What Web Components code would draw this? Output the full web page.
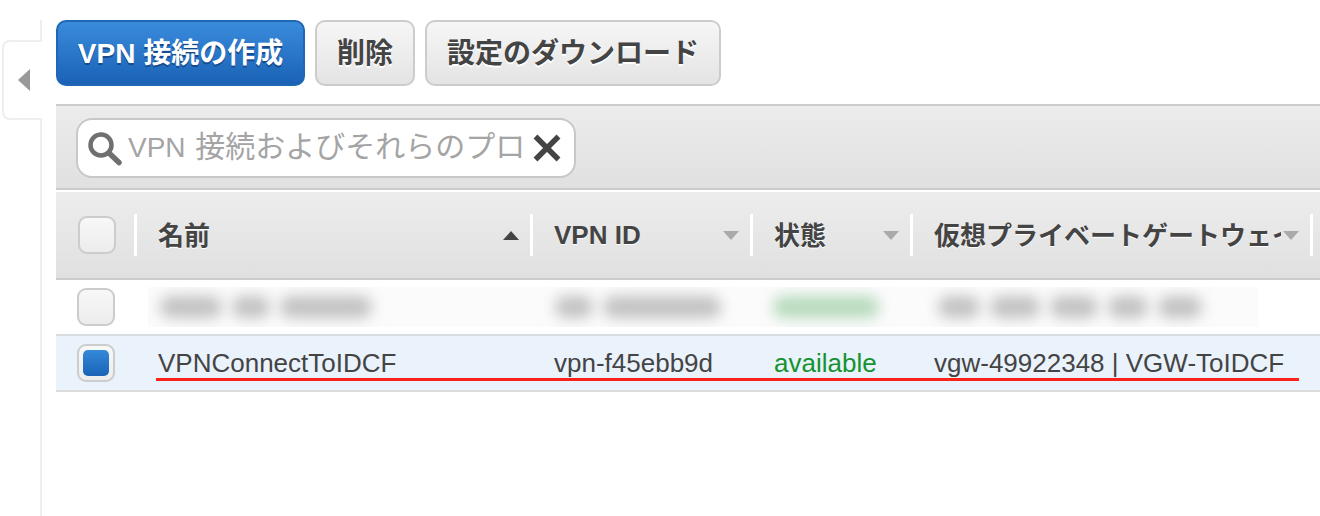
<!DOCTYPE html>
<html lang="ja">
<head>
<meta charset="utf-8">
<title>VPN 接続</title>
<style>
  html, body { margin: 0; height: 100%; background: #fff; overflow: hidden; }
  body {
    display: flex;
    font-family: "Liberation Sans", "Noto Sans CJK JP", sans-serif;
    color: #444;
  }
</style>
</head>
<body>
  <side-toggle></side-toggle>
  <vpn-page>
    <aws-button slot="actions" primary style="width:249px">VPN 接続の作成</aws-button>
    <aws-button slot="actions" style="width:100px">削除</aws-button>
    <aws-button slot="actions" style="width:296px">設定のダウンロード</aws-button>
    <search-bar slot="filter">VPN <span style="font-size:30px;margin-left:2px">接続およびそれらのプロ</span></search-bar>
    <vpn-table slot="table"></vpn-table>
  </vpn-page>

<script>
// Shared column tracks for header and rows
const COLUMNS = 'grid-template-columns: 81px 396px 220px 160px 400px 1fr;';

// Left rail with the collapse handle
class SideToggle extends HTMLElement {
  constructor() {
    super();
    this.attachShadow({ mode: 'open' }).innerHTML = `
      <style>
        :host {
          display: block;
          box-sizing: border-box;
          width: 42px;
          flex-shrink: 0;
          margin-top: 20px;
          padding: 20px 0 0 2px;
          border-right: 2px solid #eee;
        }
        .handle {
          box-sizing: border-box;
          width: 40px;
          height: 80px;
          display: flex;
          align-items: center;
          padding-left: 14px;
          background: #fff;
          border: 2px solid #eee;
          border-right: 0;
          border-radius: 8px 0 0 8px;
        }
        svg { display: block; }
      </style>
      <div class="handle">
        <svg width="12" height="22" viewBox="0 0 12 22"><path d="M12 0V22L0 11Z" fill="#999"/></svg>
      </div>`;
  }
}

// Page column: action buttons, filter bar, table
class VpnPage extends HTMLElement {
  constructor() {
    super();
    this.attachShadow({ mode: 'open' }).innerHTML = `
      <style>
        :host {
          display: block;
          flex: 1;
          min-width: 0;
          margin-left: 14px;
          padding-top: 20px;
        }
        .actions { display: flex; gap: 10px; height: 66px; margin-bottom: 18px; }
      </style>
      <div class="actions"><slot name="actions"></slot></div>
      <slot name="filter"></slot>
      <slot name="table"></slot>`;
  }
}

class AwsButton extends HTMLElement {
  constructor() {
    super();
    this.attachShadow({ mode: 'open' }).innerHTML = `
      <style>
        :host {
          display: flex;
          align-items: center;
          justify-content: center;
          box-sizing: border-box;
          height: 66px;
          padding-bottom: 4px;
          border: 2px solid #ccc;
          border-radius: 10px;
          background: linear-gradient(#f6f6f6, #e4e4e4);
          color: #444;
          font-size: 28px;
          font-weight: bold;
          text-shadow: 0 2px 0 #fff;
          white-space: nowrap;
        }
        :host([primary]) {
          border-color: #1f66b4;
          background: linear-gradient(#3a8bdc, #1a62b6);
          color: #fff;
          text-shadow: 0 2px 0 #154a8c;
        }
      </style>
      <slot></slot>`;
  }
}

class SearchBar extends HTMLElement {
  constructor() {
    super();
    this.attachShadow({ mode: 'open' }).innerHTML = `
      <style>
        :host {
          display: block;
          box-sizing: border-box;
          height: 86px;
          padding: 12px 20px 0;
          border-top: 2px solid #ccc;
          border-bottom: 2px solid #ccc;
          background: linear-gradient(#ececec, #e0e0e0);
        }
        .box {
          box-sizing: border-box;
          width: 500px;
          height: 60px;
          display: flex;
          align-items: center;
          padding-left: 9px;
          background: #fff;
          border: 2px solid #c8c8c8;
          border-radius: 16px;
        }
        .text {
          margin-left: 6px;
          padding-bottom: 8px;
          width: 399px;
          overflow: hidden;
          white-space: nowrap;
          color: #a4a4a4;
          font-size: 28px;
        }
        svg { display: block; flex-shrink: 0; }
        .clear { margin-left: 6px; }
      </style>
      <div class="box">
        <svg width="35" height="35" viewBox="0 0 35 35" fill="none">
          <circle cx="14" cy="14" r="10.5" stroke="#707070" stroke-width="4.5"/>
          <path d="M22 22L32 31.5" stroke="#707070" stroke-width="5.5" stroke-linecap="round"/>
        </svg>
        <span class="text"><slot></slot></span>
        <svg class="clear" width="28" height="28" viewBox="0 0 28 28">
          <path d="M2.5 2.5L25.5 25.5M25.5 2.5L2.5 25.5" stroke="#444" stroke-width="5.5"/>
        </svg>
      </div>`;
  }
}

class CheckBox extends HTMLElement {
  constructor() {
    super();
    this.attachShadow({ mode: 'open' }).innerHTML = `
      <style>
        :host {
          display: flex;
          align-items: center;
          justify-content: center;
          box-sizing: border-box;
          width: 38px;
          height: 38px;
          border: 2px solid #ccc;
          border-radius: 9px;
          background: linear-gradient(#f8f8f8, #ececec);
        }
        .mark {
          display: none;
          width: 26px;
          height: 26px;
          border-radius: 5px;
          background: linear-gradient(#348ad9, #1a62b6);
        }
        :host([checked]) .mark { display: block; }
      </style>
      <div class="mark"></div>`;
  }
}

class HeaderCell extends HTMLElement {
  constructor() {
    super();
    this.attachShadow({ mode: 'open' }).innerHTML = `
      <style>
        :host {
          display: flex;
          align-items: center;
          box-sizing: border-box;
          height: 42px;
          padding: 0 11px 0 21px;
          border-right: 3px solid;
          border-image: linear-gradient(90deg, #ccc 50%, #fff 50%) 1;
          font-size: 26px;
          font-weight: bold;
          white-space: nowrap;
          text-shadow: 0 1px 0 #fff;
        }
        .label { flex: 1; min-width: 0; overflow: hidden; }
        :host([ja]) .label { padding-bottom: 4px; }
        .arrow { width: 0; height: 0; flex-shrink: 0; margin-left: 2px;
          border: 8px solid transparent; border-bottom-width: 0; border-top: 9px solid #aaa; }
        :host([sorted]) .arrow { border-top-width: 0; border-bottom: 9px solid #444; }
      </style>
      <span class="label"><slot></slot></span>
      <span class="arrow"></span>`;
  }
}

// Redacted cell: soft blobs where the source image was blurred out
class BlurText extends HTMLElement {
  constructor() {
    super();
    this.attachShadow({ mode: 'open' }).innerHTML = `
      <style>
        :host {
          display: flex;
          align-items: center;
          gap: 10px;
          height: 40px;
        }
        i {
          display: block;
          height: 22px;
          border-radius: 11px;
          background: var(--blob, #c2c2c2);
          filter: blur(7px);
        }
      </style>`;
    (this.getAttribute('parts') || '').split(',').forEach(w => {
      const blob = document.createElement('i');
      blob.style.width = w + 'px';
      this.shadowRoot.appendChild(blob);
    });
  }
}

class VpnTable extends HTMLElement {
  constructor() {
    super();
    this.attachShadow({ mode: 'open' }).innerHTML = `
      <style>
        :host { display: block; position: relative; margin-top: 2px; }
        .head, .row { display: grid; ${COLUMNS} align-items: center; }
        .head {
          box-sizing: border-box;
          height: 88px;
          background: linear-gradient(#ededed, #e0e0e0);
          border-bottom: 2px solid #ccc;
        }
        .check { display: flex; align-items: center; padding-left: 21px; }
        .head .check {
          box-sizing: border-box;
          height: 42px;
          padding-left: 22px;
          border-right: 3px solid;
          border-image: linear-gradient(90deg, #ccc 50%, #fff 50%) 1;
        }
        .row { height: 54px; }
        .redacted { display: flex; align-items: center; height: 40px; background: #fbfbfb; overflow: hidden; }
        .redacted.name { margin-left: 11px; padding-left: 12px; }
        .redacted.id { padding-left: 22px; }
        .redacted.ok { padding-left: 20px; --blob: #b6dabc; }
        .redacted.gw { padding-left: 25px; margin-right: 55px; }
        .row.selected {
          box-sizing: border-box;
          height: 58px;
          background: #eaf2fc;
          border-top: 2px solid #d8dde2;
          border-bottom: 2px solid #dcdcdc;
          font-size: 26px;
          white-space: nowrap;
        }
        .row.selected .cell { padding-left: 21px; }
        .ok-text { color: #14932f; }
        .mark-line {
          position: absolute;
          left: 100px;
          top: 186px;
          width: 1143px;
          height: 3px;
          background: #fb2219;
        }
      </style>
      <div class="head">
        <div class="check"><check-box></check-box></div>
        <header-cell sorted ja>名前</header-cell>
        <header-cell>VPN ID</header-cell>
        <header-cell ja>状態</header-cell>
        <header-cell ja>仮想プライベートゲートウェイ</header-cell>
      </div>
      <div class="row">
        <div class="check"><check-box></check-box></div>
        <div class="redacted name"><blur-text parts="62,38,92"></blur-text></div>
        <div class="redacted id"><blur-text parts="38,118"></blur-text></div>
        <div class="redacted ok"><blur-text parts="106"></blur-text></div>
        <div class="redacted gw"><blur-text parts="42,50,48,40,44"></blur-text></div>
      </div>
      <div class="row selected">
        <div class="check"><check-box checked></check-box></div>
        <div class="cell">VPNConnectToIDCF</div>
        <div class="cell">vpn-f45ebb9d</div>
        <div class="cell ok-text">available</div>
        <div class="cell">vgw-49922348 | VGW-ToIDCF</div>
      </div>
      <div class="mark-line"></div>`;
  }
}

customElements.define('side-toggle', SideToggle);
customElements.define('vpn-page', VpnPage);
customElements.define('aws-button', AwsButton);
customElements.define('search-bar', SearchBar);
customElements.define('check-box', CheckBox);
customElements.define('header-cell', HeaderCell);
customElements.define('blur-text', BlurText);
customElements.define('vpn-table', VpnTable);
</script>
</body>
</html>
